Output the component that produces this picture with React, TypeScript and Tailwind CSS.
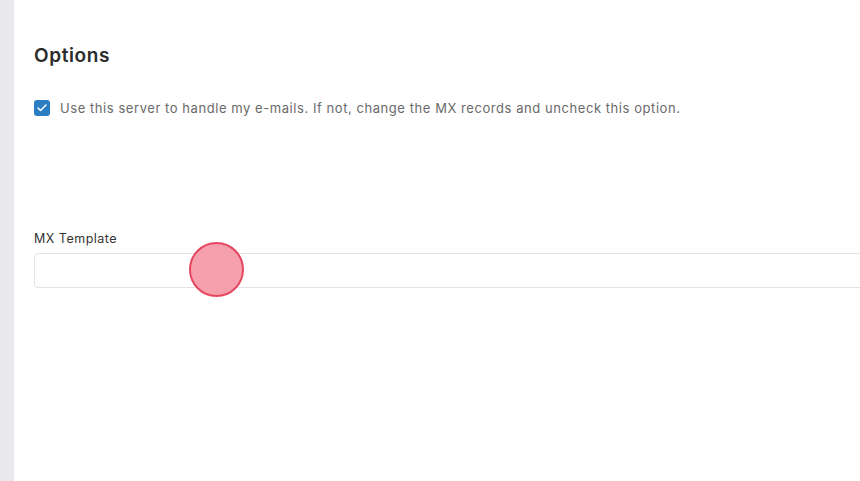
import { Check } from "lucide-react";

export default function App(){

return(

<div className="relative flex h-[481px] w-[860px] overflow-hidden bg-white" style={{fontFamily:"Inter"}}>

{/* LEFT STRIP */}

<div className="w-[14px] shrink-0 bg-[#e9e9ed]"/>

{/* MAIN */}

<div className="flex-1 pl-[20px] pt-[44px]">

<h2 className="text-[19px] font-semibold leading-[24px] tracking-[0.6px] text-[#2b2b2b]">Options</h2>

<label className="mt-[32px] flex items-center gap-[10px]">
<span className="flex h-[16px] w-[16px] items-center justify-center rounded-[3px] bg-[#2a7dc1]">
<Check size={12} strokeWidth={3} className="text-white"/>
</span>
<span className="text-[13px] leading-[16px] tracking-[0.56px] text-[#6a6a6a]">
Use this server to handle my e-mails. If not, change the MX records and uncheck this option.
</span>
</label>

<div className="mt-[115px]">
<p className="text-[12.5px] leading-[16px] tracking-[0.5px] text-[#333]">MX Template</p>
<div className="mt-[6px] h-[35px] w-[900px] rounded-[4px] border border-[#e3e3e3] bg-white"/>
</div>

</div>

{/* CLICK MARKER */}

<div className="absolute left-[189px] top-[242px] h-[55px] w-[55px] rounded-full border-2 border-[#e4475f] bg-[#f7a0ad]"/>

</div>

);

}
